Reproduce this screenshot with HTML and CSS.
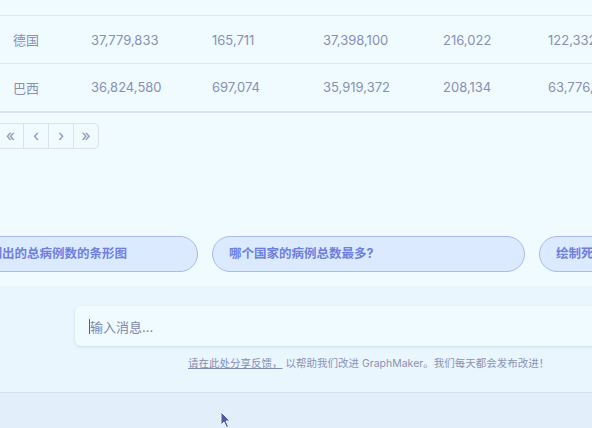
FILE: index.html
```html
<!DOCTYPE html>
<html lang="zh">
<head>
<meta charset="utf-8">
<link rel="stylesheet" href="styles.css">
</head>
<body>
<div class="page">
  <section class="top">
    <table class="data">
      <colgroup>
        <col class="c1"><col class="c2"><col class="c3"><col class="c4"><col class="c5"><col class="c6">
      </colgroup>
      <tbody>
        <tr><td>德国</td><td>37,779,833</td><td>165,711</td><td>37,398,100</td><td>216,022</td><td>122,332</td></tr>
        <tr><td>巴西</td><td>36,824,580</td><td>697,074</td><td>35,919,372</td><td>208,134</td><td>63,776,166</td></tr>
      </tbody>
    </table>
    <div class="pager">
      <button class="pbtn">«</button>
      <button class="pbtn">‹</button>
      <button class="pbtn">›</button>
      <button class="pbtn">»</button>
    </div>
    <div class="chips">
      <div class="chip">创建一个按国家列出的总病例数的条形图</div>
      <div class="chip">哪个国家的病例总数最多?</div>
      <div class="chip">绘制死亡病例数的折线图</div>
    </div>
  </section>
  <section class="composer">
    <div class="inputbox"><span class="caret"></span><span class="ph">输入消息...</span></div>
    <p class="feedback"><a class="fb-link">请在此处分享反馈，</a> 以帮助我们改进 GraphMaker。我们每天都会发布改进！</p>
  </section>
  <footer class="strip"></footer>
  <svg class="pointer" width="12" height="18" viewBox="0 0 12 18"><path d="M1 1 L1 14 L4 11 L6.5 16.5 L8.5 15.5 L6 10 L10 10 Z" fill="#4a5aa8" stroke="#eef4ff" stroke-width="1"/></svg>
</div>
</body>
</html>
```
FILE: styles.css
```css
html, body { margin: 0; padding: 0; }
body {
  width: 592px; height: 428px; overflow: hidden;
  background: #f0fbff;
  font-family: Inter, "Noto Sans", "Noto Sans CJK SC", sans-serif;
  color: #8790b3;
}
.page { position: relative; width: 592px; height: 428px; overflow: hidden; display: flex; flex-direction: column; }
.top { height: 286px; flex: none; padding-top: 15px; box-sizing: border-box; }
.data { border-collapse: collapse; table-layout: fixed; width: 680px; font-size: 13px; }
.c1 { width: 78px; } .c2 { width: 121px; } .c3 { width: 111px; } .c4 { width: 120px; } .c5 { width: 105px; } .c6 { width: 145px; }
.data td { height: 48px; padding: 0 0 0 13px; box-sizing: border-box; border-top: 1px solid #dbe8f6; white-space: nowrap; overflow: hidden; }
.data tr:last-child td { border-bottom: 2px solid #d6e4f6; }
.pager { display: flex; margin: 10px 0 0 -3px; width: max-content; border: 1px solid #d7e3f5; border-radius: 5px; overflow: hidden; }
.pbtn { width: 25px; height: 24px; border: 0; border-left: 1px solid #d7e3f5; background: transparent; color: #8a93bb; font: 16px Inter, sans-serif; padding: 0 0 2px; }
.pbtn:first-child { border-left: 0; }
.chips { display: flex; gap: 14px; margin: 87px 0 0 -115px; width: 1000px; }
.chip { flex: none; width: 313px; height: 36px; box-sizing: border-box; border: 1px solid #abb9ec; border-radius: 18px; background: #dbeafe; color: #6e7fdf; font-weight: 700; font-size: 12.5px; line-height: 34px; padding-left: 16px; white-space: nowrap; overflow: hidden; }
.composer { flex: none; height: 107px; box-sizing: border-box; background: #eaf6fe; border-bottom: 1px solid #d3e1f3; padding: 20px 0 0 75px; }
.inputbox { width: 580px; height: 40px; box-sizing: border-box; background: #f0fbff; border-radius: 6px; box-shadow: 0 1px 3px rgba(150, 170, 210, 0.35); display: flex; align-items: center; padding-left: 14px; font-size: 13px; color: #7d86ad; }
.caret { width: 1px; height: 15px; background: #4a5aa8; }
.feedback { margin: 9px 0 0 113px; font-size: 10.5px; color: #8a92b2; white-space: nowrap; }
.fb-link { text-decoration: underline; color: #858db3; }
.strip { flex: 1; background: #e3eefb; }
.pointer { position: absolute; left: 220px; top: 411px; }
```
